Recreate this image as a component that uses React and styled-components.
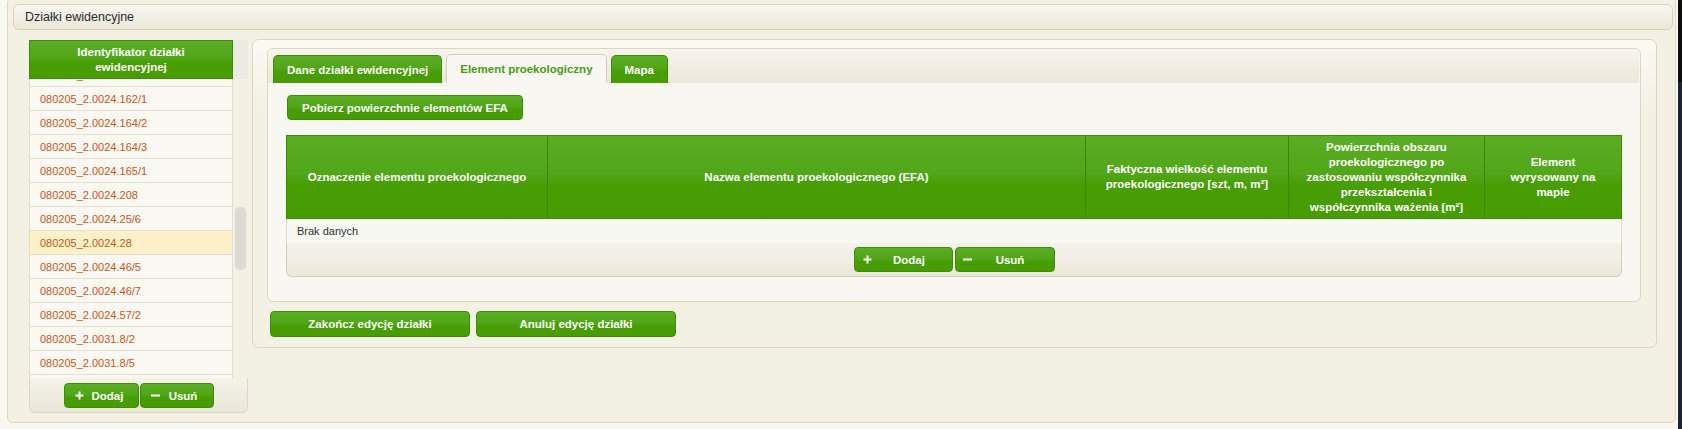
import React from 'react';
import styled, { createGlobalStyle, css } from 'styled-components';

const GlobalStyle = createGlobalStyle`
  html, body { margin: 0; padding: 0; }
  body {
    background: #f8f7f1;
    font-family: "Liberation Sans", Arial, sans-serif;
    font-size: 11px;
    color: #2e2e2e;
  }
  * { box-sizing: border-box; }
`;

const greenFill = css`
  background: linear-gradient(to bottom, #5bad25 0%, #52a619 45%, #479d03 60%, #469c01 100%);
`;

const Screen = styled.div`
  display: flex;
  width: 1682px;
  height: 429px;
  overflow: hidden;
`;

const Stage = styled.div`
  flex: 1;
  padding-left: 7px;
`;

const EdgeStrip = styled.div`
  width: 4px;
  background: linear-gradient(to bottom, #0c0c0c 0, #0c0c0c 82px, #1b2332 82px);
`;

const Window = styled.div`
  margin-top: -3px;
  width: 1669px;
  height: 426px;
  border: 1px solid #ddd6c1;
  border-radius: 6px;
  background: #f3f0e4;
  padding: 6px 2px 0 5px;
`;

const TitleBar = styled.div`
  height: 26px;
  border: 1px solid #d7d0b9;
  border-radius: 6px;
  background: linear-gradient(to bottom, #f9f8f2 0%, #f1eee4 50%, #ebe7d9 100%);
  padding-left: 11px;
  display: flex;
  align-items: center;
  font-size: 12.5px;
  color: #2b2b2b;
`;

const Body = styled.div`
  display: flex;
  align-items: flex-start;
  gap: 4px;
  margin-top: 9px;
  padding-left: 16px;
`;

/* ---------- left list ---------- */
const LeftCol = styled.div`
  width: 219px;
  margin-top: 1px;
  display: flex;
  flex-direction: column;
`;

const ListHead = styled.div`
  display: flex;
  height: 39px;
`;

const ListHeadCell = styled.div`
  width: 204px;
  ${greenFill};
  border: 1px solid #3f8d07;
  color: #fff;
  font-weight: bold;
  font-size: 11.5px;
  line-height: 15px;
  text-align: center;
  display: flex;
  align-items: center;
  justify-content: center;
  padding: 0 20px;
`;

const HeadSpacer = styled.div`
  flex: 1;
  background: #ecebe3;
`;

const ListViewport = styled.div`
  display: flex;
  height: 299px;
  overflow: hidden;
`;

const Rows = styled.div`
  width: 204px;
  overflow: hidden;
  border-left: 1px solid #e2ddca;
  border-right: 1px solid #e2ddca;
`;

const RowsInner = styled.div`
  margin-top: -16px;
`;

const Row = styled.div`
  height: 24px;
  border-bottom: 1px solid #e5e0ce;
  background: ${p => (p.$selected ? '#fcf1c8' : '#f9f8f3')};
  color: #c8561a;
  padding-left: 10px;
  display: flex;
  align-items: center;
  font-size: 11px;
`;

const Track = styled.div`
  width: 15px;
  padding-left: 1px;
`;

const Thumb = styled.div`
  margin-top: 127px;
  width: 13px;
  height: 65px;
  background: #dcdad2;
  border: 1px solid #f0efe9;
  border-radius: 6px;
`;

const ListFooter = styled.div`
  height: 35px;
  border: 1px solid #ddd6c0;
  border-top: none;
  border-radius: 0 0 6px 6px;
  background: linear-gradient(to bottom, #f4f2ea 0%, #efece2 50%, #ebe7d9 100%);
  display: flex;
  justify-content: center;
  align-items: flex-start;
  gap: 1px;
  padding-top: 5px;
`;

/* ---------- buttons ---------- */
const GreenButton = styled.button`
  width: ${p => p.$w}px;
  height: ${p => p.$h || 25}px;
  ${greenFill};
  border: 1px solid #3e8d07;
  border-radius: 4px;
  color: #fff;
  font-family: "Liberation Sans", Arial, sans-serif;
  font-weight: bold;
  font-size: 11.5px;
  display: flex;
  align-items: center;
  justify-content: center;
  padding: ${p => p.$pad || '0'};
  cursor: pointer;
  white-space: nowrap;
`;

const IconSlot = styled.span`
  width: 9px;
  height: 9px;
  display: flex;
  align-items: center;
  justify-content: center;
  flex: none;
`;

const Label = styled.span`
  flex: 1;
  text-align: center;
`;

const PlusIcon = () => (
  <svg width="9" height="9" viewBox="0 0 9 9">
    <path d="M4.5 0.5v8M0.5 4.5h8" stroke="#fff" strokeWidth="2" />
  </svg>
);

const MinusIcon = () => (
  <svg width="9" height="9" viewBox="0 0 9 9">
    <path d="M0 4.5h9" stroke="#fff" strokeWidth="2" />
  </svg>
);

const IconButton = ({ icon, children, w, pad }) => (
  <GreenButton $w={w} $h={25} $pad={pad}>
    <IconSlot>{icon === 'plus' ? <PlusIcon /> : <MinusIcon />}</IconSlot>
    <Label>{children}</Label>
  </GreenButton>
);

/* ---------- right panel ---------- */
const RightPanel = styled.div`
  width: 1405px;
  height: 309px;
  border: 1px solid #ddd6c0;
  border-radius: 7px;
  background: linear-gradient(to bottom, #fbfaf5 0%, #f3f0e4 70px, #f3f0e4 100%);
  padding: 8px 15px 0 14px;
`;

const TabPanel = styled.div`
  height: 254px;
  border: 1px solid #ddd6c0;
  border-radius: 6px;
  background: #f8f7f1;
`;

const TabStrip = styled.div`
  height: 34px;
  border-radius: 5px 5px 0 0;
  background: linear-gradient(to bottom, #f6f4ed 0%, #f0ede3 50%, #ebe7da 100%);
  display: flex;
  align-items: flex-end;
  gap: 3px;
  padding-left: 5px;
  margin-right: 1px;
`;

const Tab = styled.div`
  height: ${p => (p.$active ? 29 : 28)}px;
  padding: 0 13px;
  border-radius: 5px 5px 0 0;
  font-weight: bold;
  font-size: 11.5px;
  display: flex;
  align-items: center;
  white-space: nowrap;
  ${p =>
    p.$active
      ? css`
          background: #f8f7f1;
          border: 1px solid #d6cfb9;
          border-bottom: none;
          color: #4b9b13;
          margin: 0 1px;
        `
      : css`
          ${greenFill};
          border: 1px solid #3f8d07;
          border-bottom: none;
          color: #fff;
        `}
`;

const TabContent = styled.div`
  padding: 12px 18px 0 18px;
`;

const TopActions = styled.div`
  display: flex;
  padding-left: 1px;
`;

const Table = styled.div`
  margin-top: 15px;
  width: 1336px;
`;

const HeadRow = styled.div`
  display: grid;
  grid-template-columns: 260px 538px 203px 196px 1fr;
  height: 84px;
  border: 1px solid #3d8b06;
  ${greenFill};
`;

const HeadCell = styled.div`
  border-left: ${p => (p.$first ? 'none' : '1px solid #3a8704')};
  color: #fff;
  font-weight: bold;
  font-size: 11.5px;
  line-height: 15px;
  text-align: center;
  display: flex;
  align-items: center;
  justify-content: center;
  padding: 0 ${p => (p.$px != null ? p.$px : 12)}px;
`;

const EmptyRow = styled.div`
  height: 24px;
  background: #f8f8f3;
  border-left: 1px solid #e0dbc8;
  border-right: 1px solid #e0dbc8;
  padding-left: 10px;
  display: flex;
  align-items: center;
  font-size: 11px;
  color: #303030;
`;

const TableFooter = styled.div`
  height: 34px;
  border: 1px solid #d6cfb9;
  border-top: none;
  border-radius: 0 0 6px 6px;
  background: linear-gradient(to bottom, #f4f1e8 0%, #f1eee5 50%, #ebe7d9 100%);
  display: flex;
  justify-content: center;
  align-items: flex-start;
  gap: 2px;
  padding-top: 4px;
`;

const BottomActions = styled.div`
  display: flex;
  gap: 6px;
  margin-top: 9px;
  padding-left: 3px;
`;

const parcels = [
  '080205_2.0024.161/2',
  '080205_2.0024.162/1',
  '080205_2.0024.164/2',
  '080205_2.0024.164/3',
  '080205_2.0024.165/1',
  '080205_2.0024.208',
  '080205_2.0024.25/6',
  '080205_2.0024.28',
  '080205_2.0024.46/5',
  '080205_2.0024.46/7',
  '080205_2.0024.57/2',
  '080205_2.0031.8/2',
  '080205_2.0031.8/5',
  '080205_2.0031.8/6',
];

export default function App() {
  return (
    <>
      <GlobalStyle />
      <Screen>
        <Stage>
          <Window>
            <TitleBar>Działki ewidencyjne</TitleBar>
            <Body>
              <LeftCol>
                <ListHead>
                  <ListHeadCell>Identyfikator działki ewidencyjnej</ListHeadCell>
                  <HeadSpacer />
                </ListHead>
                <ListViewport>
                  <Rows>
                    <RowsInner>
                      {parcels.map(p => (
                        <Row key={p} $selected={p === '080205_2.0024.28'}>
                          {p}
                        </Row>
                      ))}
                    </RowsInner>
                  </Rows>
                  <Track>
                    <Thumb />
                  </Track>
                </ListViewport>
                <ListFooter>
                  <IconButton icon="plus" w={75} pad="0 6px 0 10px">Dodaj</IconButton>
                  <IconButton icon="minus" w={74} pad="0 6px 0 10px">Usuń</IconButton>
                </ListFooter>
              </LeftCol>

              <RightPanel>
                <TabPanel>
                  <TabStrip>
                    <Tab>Dane działki ewidencyjnej</Tab>
                    <Tab $active>Element proekologiczny</Tab>
                    <Tab>Mapa</Tab>
                  </TabStrip>
                  <TabContent>
                    <TopActions>
                      <GreenButton $w={236} $h={25}>Pobierz powierzchnie elementów EFA</GreenButton>
                    </TopActions>
                    <Table>
                      <HeadRow>
                        <HeadCell $first>Oznaczenie elementu proekologicznego</HeadCell>
                        <HeadCell>Nazwa elementu proekologicznego (EFA)</HeadCell>
                        <HeadCell>Faktyczna wielkość elementu proekologicznego [szt, m, m²]</HeadCell>
                        <HeadCell>
                          Powierzchnia obszaru proekologicznego po zastosowaniu współczynnika
                          przekształcenia i współczynnika ważenia [m²]
                        </HeadCell>
                        <HeadCell $px={20}>Element wyrysowany na mapie</HeadCell>
                      </HeadRow>
                      <EmptyRow>Brak danych</EmptyRow>
                      <TableFooter>
                        <IconButton icon="plus" w={99} pad="0 5px 0 8px">Dodaj</IconButton>
                        <IconButton icon="minus" w={100} pad="0 5px 0 7px">Usuń</IconButton>
                      </TableFooter>
                    </Table>
                  </TabContent>
                </TabPanel>
                <BottomActions>
                  <GreenButton $w={200} $h={26}>Zakończ edycję działki</GreenButton>
                  <GreenButton $w={200} $h={26}>Anuluj edycję działki</GreenButton>
                </BottomActions>
              </RightPanel>
            </Body>
          </Window>
        </Stage>
        <EdgeStrip />
      </Screen>
    </>
  );
}
